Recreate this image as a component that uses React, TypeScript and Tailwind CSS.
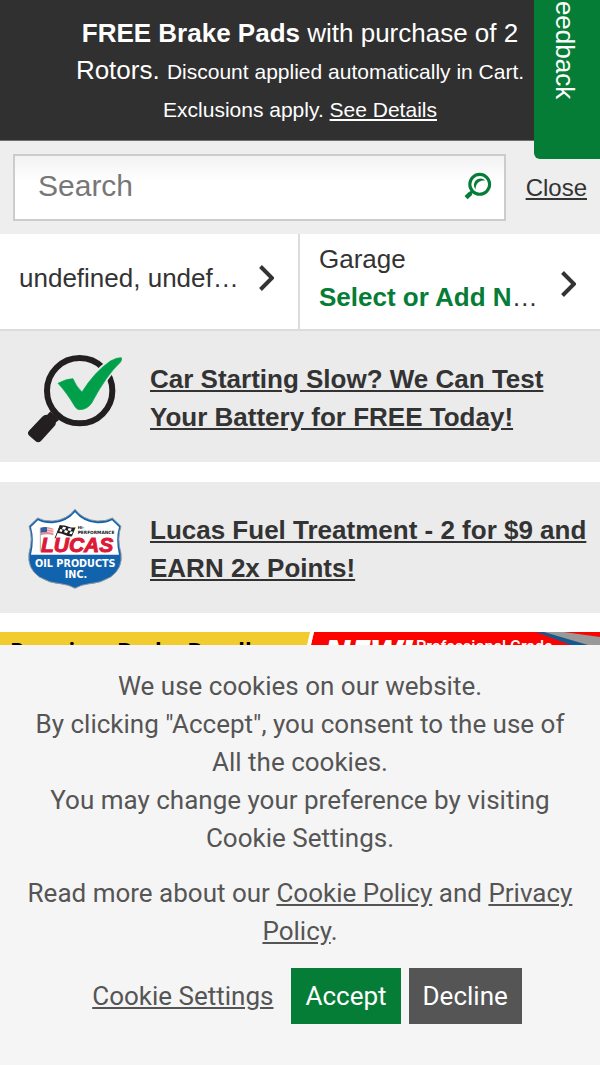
import { useState } from "react"
import type { ReactNode } from "react"

interface Promo {
  id: number
  title: string
  icon: ReactNode
}

function SearchIcon() {
  return (
    <svg viewBox="495 95 82 82" className="h-7 w-7" fill="none" aria-hidden="true">
      <circle cx="541" cy="131" r="29" stroke="#067d36" strokeWidth="9" />
      <path d="M520 151l-12 12" stroke="#067d36" strokeWidth="9" />
      <path d="M515 157l-14 13" stroke="#067d36" strokeWidth="13" />
      <path d="M557 120A19 19 0 0 0 529 146A24 24 0 0 1 557 120Z" fill="#067d36" />
    </svg>
  )
}

function Chevron() {
  return (
    <svg viewBox="0 0 15 26" className="h-[26px] w-[15px] shrink-0" fill="none" aria-hidden="true">
      <path d="M1.5 1.5L13 13L1.5 24.5" stroke="#333" strokeWidth="4" />
    </svg>
  )
}

const checkPath =
  "M144 131Q168 117 189 117Q198 140 216 157Q252 98 301 64Q321 53 334 54Q337 60 331 68Q290 106 245 190Q232 210 208 210Q200 209 195 201Q168 156 144 131Z"

function BatteryCheckIcon() {
  return (
    <svg viewBox="54 40 282 270" className="w-[94px] shrink-0" aria-hidden="true">
      <circle cx="209" cy="153" r="98" fill="none" stroke="#231f20" strokeWidth="18" />
      <path d="M121 215L148 240L138 248Q138 256 131 262L93 304Q85 311 77 305L58 288Q50 281 57 273L96 232Q103 224 112 225Z" fill="#231f20" />
      <path d={checkPath} fill="#00a04a" stroke="#ebebeb" strokeWidth="12" />
      <path d={checkPath} fill="#00a04a" stroke="#00a04a" strokeWidth="2" />
    </svg>
  )
}

function LucasLogo() {
  return (
    <svg viewBox="38 36 282 241" className="w-[94px] shrink-0 overflow-visible" role="img" aria-label="Lucas Oil Products">
      <path
        d="M179 40Q203 72 246 75Q274 76 291 66L317 91Q304 128 317 172Q323 217 286 243Q254 262 224 263Q196 266 179 277Q162 266 134 263Q104 262 72 243Q35 217 41 172Q54 128 41 91L67 66Q84 76 112 75Q155 72 179 40Z"
        fill="#1263ad"
        stroke="#8d98a3"
        strokeWidth="3"
      />
      <path
        d="M179 49Q205 80 246 82Q273 83 290 73L311 93Q300 132 311 176H47Q58 132 47 93L68 73Q85 83 112 82Q153 80 179 49Z"
        fill="#fff"
      />
      <path d="M76 96Q94 89 114 98V118Q95 112 76 118Z" fill="#e88a93" />
      <path d="M77 102Q95 95 114 103M77 109Q95 102 114 110" stroke="#fff" strokeWidth="2" fill="none" />
      <path d="M76 96Q86 92 95 94V108Q85 108 76 110Z" fill="#315fa6" />
      <path d="M75 94V166" stroke="#888" strokeWidth="2" />
      <path d="M135 87L119 127" stroke="#222" strokeWidth="3" />
      <path d="M134 88Q150 88 160 92Q170 96 181 94L170 121Q157 122 148 116Q138 111 125 111Z" fill="#222" />
      <path d="M143 92l9 2-3 7-9-2zM160 96l9 2-3 7-9-2zM149 102l9 3-3 7-9-3zM135 99l7 2-3 7-7-2zM166 106l7 1-4 8-7-2z" fill="#fff" />
      <text x="187" y="100" fontSize="12" fontWeight="700" fill="#222" fontFamily="DejaVu Sans">HI-</text>
      <text x="187" y="115" fontSize="13" fontWeight="700" fill="#222" fontFamily="DejaVu Sans">PERFORMANCE</text>
      <text x="77" y="169" fontSize="63" fontWeight="700" fontStyle="italic" fill="#dc1936" stroke="#dc1936" strokeWidth="3" fontFamily="Liberation Sans">LUCAS</text>
      <text x="180" y="212" textAnchor="middle" fontSize="29" fontWeight="700" fill="#fff" fontFamily="DejaVu Sans">OIL PRODUCTS</text>
      <text x="182" y="247" textAnchor="middle" fontSize="29" fontWeight="700" fill="#fff" fontFamily="DejaVu Sans">INC.</text>
    </svg>
  )
}

const promos: Promo[] = [
  { id: 1, title: "Car Starting Slow? We Can Test Your Battery for FREE Today!", icon: <BatteryCheckIcon /> },
  { id: 2, title: "Lucas Fuel Treatment - 2 for $9 and EARN 2x Points!", icon: <LucasLogo /> },
]

function BrakeBanner() {
  return (
    <a href="#brakes" className="flex h-40 overflow-hidden bg-[#f2cb2f]">
      <div className="flex-1 pt-0.5 pl-[10px] font-['Open_Sans'] text-[22px] leading-[30px] font-bold text-black">
        Premium Brake Bundle
      </div>
      <div className="relative w-[292px]">
        <svg viewBox="0 0 292 160" className="absolute inset-0 h-full w-full overflow-visible" aria-hidden="true">
          <path d="M6 0H292V160H-31Z" fill="#fb0300" />
          <path d="M2 0H6L-31 160H-35Z" fill="#fff" />
          <path d="M228 0L292 24V13L236 0Z" fill="#17598f" />
          <path d="M236 0L280 13H292V5L256 0Z" fill="#999" />
        </svg>
        <div className="relative flex items-start gap-1 pl-4 whitespace-nowrap text-white">
          <span className="font-['Open_Sans'] text-[34px] leading-[38px] font-extrabold italic">NEW!</span>
          <span className="font-['Roboto'] text-base leading-[30px] font-medium">Professional Grade</span>
        </div>
      </div>
    </a>
  )
}

function CookieNotice({ onClose }: { onClose: () => void }) {
  return (
    <section
      aria-label="Cookie notice"
      className="fixed inset-x-0 bottom-0 bg-[#f5f5f5] px-5 pt-[22px] pb-[41px] text-center font-['Roboto',sans-serif] text-[26px] leading-[38px] text-[#555]"
    >
      <p>
        We use cookies on our website.
        <br />
        By clicking "Accept", you consent to the use of All the cookies.
        <br />
        You may change your preference by visiting Cookie Settings.
      </p>
      <p className="mt-[17px]">
        Read more about our <a href="#cookie-policy" className="underline">Cookie Policy</a> and{" "}
        <a href="#privacy" className="underline">Privacy Policy</a>.
      </p>
      <div className="mt-[18px] flex items-center justify-center gap-2 pl-[14px]">
        <a href="#cookie-settings" className="mr-[10px] underline">Cookie Settings</a>
        <button onClick={onClose} className="h-14 bg-[#067d36] px-[14px] text-white">Accept</button>
        <button onClick={onClose} className="h-14 bg-[#555] px-[14px] text-white">Decline</button>
      </div>
    </section>
  )
}

export default function App() {
  const [query, setQuery] = useState("")
  const [showCookies, setShowCookies] = useState(true)

  return (
    <div className="bg-white font-['Liberation_Sans',sans-serif] text-[26px] leading-[38px] text-[#333]">
      <div className="border-b border-[#6f6f6f] bg-[#303030] px-[70px] pt-[15px] pb-3 text-center leading-[37px] text-white">
        <strong>FREE Brake Pads</strong> with purchase of 2 Rotors.{" "}
        <span className="text-[21px]">
          Discount applied automatically in Cart. Exclusions apply.{" "}
          <a href="#details" className="underline">See Details</a>
        </span>
      </div>

      <form onSubmit={e => e.preventDefault()} className="flex items-center gap-5 bg-[#eee] p-[13px]">
        <div className="flex h-[67px] min-w-0 flex-1 items-center border-2 border-[#ccc] bg-linear-to-b from-[#f2f2f2] to-white to-40% pr-3 pl-[23px]">
          <input
            type="text"
            aria-label="Search"
            placeholder="Search"
            value={query}
            onChange={e => setQuery(e.target.value)}
            className="min-w-0 flex-1 bg-transparent pb-1 text-3xl outline-none placeholder:text-[#777]"
          />
          <button type="submit" aria-label="Submit search" className="pb-1">
            <SearchIcon />
          </button>
        </div>
        <button type="button" onClick={() => setQuery("")} className="text-2xl underline">
          Close
        </button>
      </form>

      <div className="grid grid-cols-2 border-b-2 border-[#dcdcdc]">
        <a href="#store" className="flex items-center gap-[18px] border-r-2 border-[#dcdcdc] pr-6 pb-2 pl-[19px]">
          <span className="min-w-0 flex-1 truncate">undefined, undefined</span>
          <Chevron />
        </a>
        <a href="#garage" className="flex items-center gap-[18px] pt-1 pr-6 pl-[19px]">
          <span className="min-w-0 flex-1 pt-[2px] pb-[13px]">
            <span className="block">Garage</span>
            <span className="block truncate">
              <b className="text-[#067d36]">Select or Add New Vehicle</b>
            </span>
          </span>
          <Chevron />
        </a>
      </div>

      <div className="flex flex-col gap-5 pb-[19px]">
        {promos.map(promo => (
          <a key={promo.id} href="#promo" className="flex min-h-[131px] items-center gap-7 bg-[#ebebeb] pt-0.5 pl-7 font-bold underline">
            {promo.icon}
            <span>{promo.title}</span>
          </a>
        ))}
      </div>

      <BrakeBanner />

      <button className="fixed -top-[75px] right-0 w-[66px] rounded-bl-md bg-[#067d36] pt-[60px] pr-1 pb-[60px] text-left leading-[62px] text-white [writing-mode:vertical-rl]">
        Feedback
      </button>

      {showCookies && <CookieNotice onClose={() => setShowCookies(false)} />}
    </div>
  )
}
